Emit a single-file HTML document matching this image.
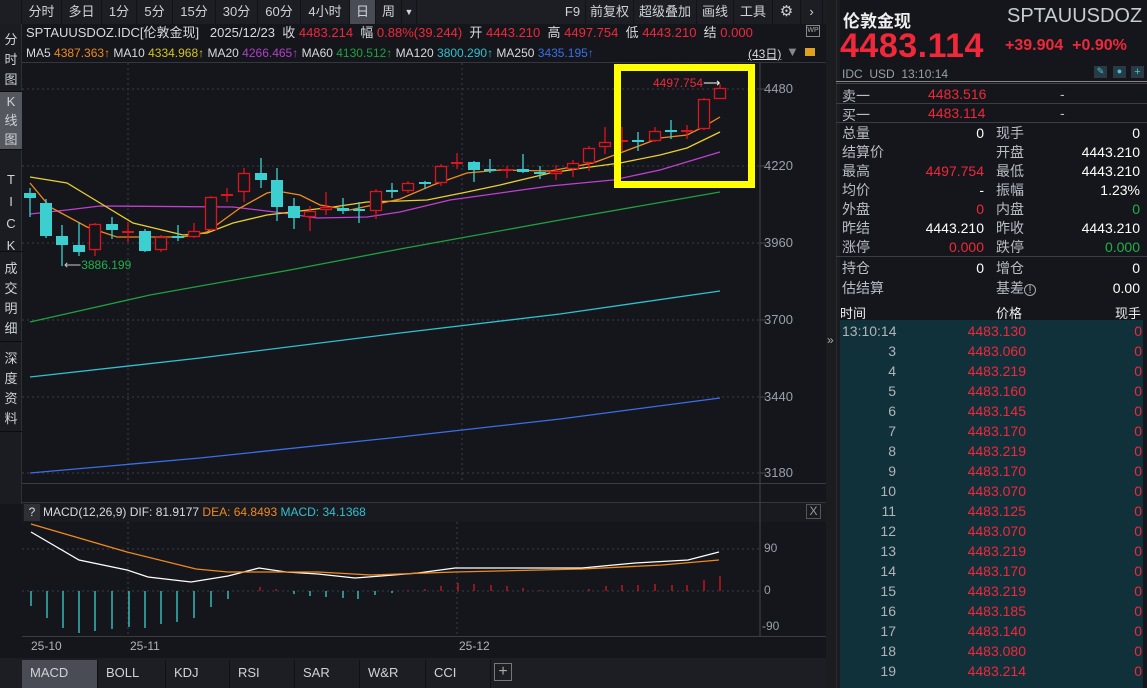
<!DOCTYPE html>
<html><head><meta charset="utf-8">
<style>
*{margin:0;padding:0;box-sizing:border-box}
body{width:1147px;height:688px;overflow:hidden;background:#14161b;font-family:"Liberation Sans","Noto Sans CJK SC",sans-serif;color:#d8dadf;position:relative}
.a{position:absolute;white-space:nowrap}
.tb{position:absolute;top:0;height:24px;font-size:13px;line-height:24px;text-align:center;color:#cfd2d8;border-right:1px solid #111317}
.side{position:absolute;left:0;width:22px;font-size:13px;line-height:20px;text-align:center;color:#cfd2d8;border-bottom:1px solid #0c0d10}
.r{color:#f0283a}.g{color:#1fb14c}.w{color:#fff}.gr{color:#9aa0a8}
.tab{position:absolute;top:660px;height:28px;line-height:26px;font-size:13px;color:#cfd2d8;padding-left:8px;border-right:1px solid #0f1114}
.rp{font-size:14px;color:#b9bdc4}
</style></head><body>
<div class="a" style="left:0;top:0;width:826px;height:24px;background:#1c1e23"></div>
<div class="tb" style="left:0;width:22px"></div>
<div class="tb" style="left:22px;width:40px">分时</div>
<div class="tb" style="left:62px;width:40px">多日</div>
<div class="tb" style="left:102px;width:35px">1分</div>
<div class="tb" style="left:137px;width:36px">5分</div>
<div class="tb" style="left:173px;width:43px">15分</div>
<div class="tb" style="left:216px;width:42px">30分</div>
<div class="tb" style="left:258px;width:43px">60分</div>
<div class="tb" style="left:301px;width:49px">4小时</div>
<div class="tb" style="left:350px;width:26px;background:#4a4c55">日</div>
<div class="tb" style="left:376px;width:26px">周</div>
<div class="tb" style="left:402px;width:15px;font-size:9px">▼</div>
<div class="tb" style="left:560px;width:26px">F9</div>
<div class="tb" style="left:586px;width:48px">前复权</div>
<div class="tb" style="left:634px;width:63px">超级叠加</div>
<div class="tb" style="left:697px;width:37px">画线</div>
<div class="tb" style="left:734px;width:39px">工具</div>
<div class="tb" style="left:773px;width:28px;font-size:15px">⚙</div>
<div class="tb" style="left:801px;width:22px">›</div>
<div class="a" style="left:0;top:24px;width:22px;height:480px;background:#1a1c21;border-right:1px solid #2d3036"></div>
<div class="side" style="top:30px;height:62px">分<br>时<br>图</div>
<div class="side" style="top:92px;height:58px;background:#55575f;padding-top:0px;line-height:19px">K<br>线<br>图</div>
<div class="side" style="top:150px;height:102px;padding-top:19px;line-height:22px">T<br>I<br>C<br>K</div>
<div class="side" style="top:252px;height:90px;padding-top:7px">成<br>交<br>明<br>细</div>
<div class="side" style="top:342px;height:90px;padding-top:7px">深<br>度<br>资<br>料</div>
<div class="a" style="left:26px;top:25px;font-size:13px;line-height:16px">SPTAUUSDOZ.IDC[伦敦金现]&nbsp;&nbsp;&nbsp;2025/12/23&nbsp;&nbsp;收 <span class="r">4483.214</span>&nbsp;&nbsp;幅 <span class="r">0.88%(39.244)</span>&nbsp;&nbsp;开 <span class="r">4443.210</span>&nbsp;&nbsp;高 <span class="r">4497.754</span>&nbsp;&nbsp;低 <span class="r">4443.210</span>&nbsp;&nbsp;结 <span class="r">0.000</span></div>
<div class="a" style="left:26px;top:45px;font-size:12px;line-height:16px">MA5 <span style="color:#f08a1e">4387.363↑</span> MA10 <span style="color:#d6c21e">4334.968↑</span> MA20 <span style="color:#b040c8">4266.465↑</span> MA60 <span style="color:#20a040">4130.512↑</span> MA120 <span style="color:#30c0d0">3800.290↑</span> MA250 <span style="color:#3a6ee8">3435.195↑</span></div>
<div class="a" style="left:748px;top:45px;font-size:12px;text-decoration:underline">(43日)</div>
<div class="a" style="left:786px;top:44px;font-size:13px;color:#888">▼</div>
<div class="a" style="left:805px;top:48px;width:10px;height:8px;background:#e0a020"></div>
<div class="a" style="left:806px;top:25px;width:14px;height:12px;border:1px solid #888;font-size:7px;color:#aaa;line-height:10px;text-align:center">WP</div>
<div class="a" style="left:22px;top:62px;width:804px;height:1px;background:#33363c"></div>
<div class="a gr" style="left:764px;top:81px;font-size:13px">4480</div>
<div class="a gr" style="left:764px;top:158px;font-size:13px">4220</div>
<div class="a gr" style="left:764px;top:235px;font-size:13px">3960</div>
<div class="a gr" style="left:764px;top:312px;font-size:13px">3700</div>
<div class="a gr" style="left:764px;top:389px;font-size:13px">3440</div>
<div class="a gr" style="left:764px;top:465px;font-size:13px">3180</div>
<div class="a r" style="left:653px;top:76px;font-size:12px">4497.754<span class="w">⟶</span></div>
<div class="a g" style="left:64px;top:258px;font-size:12px"><span style="color:#ccc">⟵</span>3886.199</div>
<div class="a" style="left:22px;top:502px;width:804px;height:20px;background:#181a1f;border-top:1px solid #33363c"></div>
<div class="a" style="left:24px;top:504px;width:16px;height:17px;background:#2e3036;font-size:12px;text-align:center;line-height:17px">?</div>
<div class="a" style="left:43px;top:505px;font-size:12px">MACD(12,26,9) DIF: 81.9177 <span style="color:#f08a1e">DEA: 64.8493</span> <span style="color:#30c0d0">MACD: 34.1368</span></div>
<div class="a" style="left:806px;top:504px;width:15px;height:15px;border:1px solid #555;color:#999;font-size:12px;line-height:13px;text-align:center">X</div>
<div class="a gr" style="left:764px;top:541px;font-size:12px">90</div>
<div class="a gr" style="left:764px;top:583px;font-size:12px">0</div>
<div class="a gr" style="left:762px;top:619px;font-size:12px">-90</div>
<div class="a gr" style="left:31px;top:639px;font-size:12px;color:#b0b4ba">25-10</div>
<div class="a gr" style="left:130px;top:639px;font-size:12px;color:#b0b4ba">25-11</div>
<div class="a gr" style="left:459px;top:639px;font-size:12px;color:#b0b4ba">25-12</div>
<div class="a" style="left:0;top:658px;width:826px;height:30px;background:#1c1e23"></div>
<div class="tab" style="left:22px;width:76px;background:#4a4c55">MACD</div>
<div class="tab" style="left:98px;width:68px">BOLL</div>
<div class="tab" style="left:166px;width:64px">KDJ</div>
<div class="tab" style="left:230px;width:65px">RSI</div>
<div class="tab" style="left:295px;width:65px">SAR</div>
<div class="tab" style="left:360px;width:66px">W&amp;R</div>
<div class="tab" style="left:426px;width:65px">CCI</div>
<div class="a" style="left:494px;top:663px;width:18px;height:18px;border:1px solid #777;color:#aaa;text-align:center;line-height:15px;font-size:16px">+</div>
<svg class="a" style="left:0;top:0" width="830" height="688">
<g stroke="#3a3d44" stroke-dasharray="2,3" stroke-width="1">
<line x1="22" y1="89" x2="760" y2="89"/><line x1="22" y1="166" x2="760" y2="166"/><line x1="22" y1="243" x2="760" y2="243"/><line x1="22" y1="320" x2="760" y2="320"/><line x1="22" y1="397" x2="760" y2="397"/><line x1="22" y1="473" x2="760" y2="473"/>
<line x1="128" y1="63" x2="128" y2="483"/><line x1="462" y1="63" x2="462" y2="483"/>
<line x1="22" y1="549" x2="760" y2="549"/><line x1="22" y1="591" x2="760" y2="591"/><line x1="128" y1="522" x2="128" y2="636"/><line x1="457" y1="522" x2="457" y2="636"/>
</g>
<line x1="760" y1="63" x2="760" y2="636" stroke="#44474e"/>
<line x1="22" y1="483.5" x2="826" y2="483.5" stroke="#3a3d44"/>
<line x1="22" y1="636.5" x2="826" y2="636.5" stroke="#3a3d44"/>
<g stroke="#44474e"><line x1="760" y1="89" x2="766" y2="89"/><line x1="760" y1="166" x2="766" y2="166"/><line x1="760" y1="243" x2="766" y2="243"/><line x1="760" y1="320" x2="766" y2="320"/><line x1="760" y1="397" x2="766" y2="397"/><line x1="760" y1="473" x2="766" y2="473"/></g>
<g fill="none" stroke-width="1.3">
<polyline stroke="#3a6ee8" points="30,473 200,458 400,437 560,419 720,398"/>
<polyline stroke="#30c0d0" points="30,377 200,358 400,333 560,314 720,291"/>
<polyline stroke="#20a040" points="30,322 150,295 290,270 400,249 560,220 720,192"/>
<polyline stroke="#c040d0" points="30,214 67,210 100,206 233,207 283,213 317,218 367,217 400,212 450,200 550,186 613,180 660,170 720,152"/>
<polyline stroke="#e8d030" points="30,177 67,183 100,203 133,223 183,235 207,233 233,223 267,215 300,211 333,207 367,202 400,201 427,200 467,192 500,185 550,173 583,168 620,163 660,155 687,148 720,132"/>
<polyline stroke="#f08a1e" points="30,183 50,207 87,227 117,237 183,237 207,232 240,208 267,193 277,191 300,195 320,205 350,210 400,199 433,185 467,173 500,170 550,171 593,163 620,153 660,138 687,135 703,127 720,117"/>
<polyline stroke="#ffffff" points="31,532 79,560 127,570 148,577 191,582 228,576 259,568 286,572 318,574 355,578 381,576 418,573 455,568 529,568 582,568 635,563 688,560 719,552"/>
<polyline stroke="#f08a1e" points="31,524 127,552 196,569 228,572 318,572 371,575 455,572 582,569 662,565 719,560"/>
</g>
<g id="cd"></g>
<rect x="617.5" y="67.5" width="134" height="117" fill="none" stroke="#ffff00" stroke-width="7"/>
</svg>
<div class="a" style="left:826px;top:0;width:14px;height:688px;background:#1a1c20"></div>
<div class="a" style="left:836px;top:0;width:1px;height:688px;background:#2a2c31"></div>
<div class="a" style="left:827px;top:333px;font-size:12px;color:#aaa">»</div>
<div class="a" style="left:840px;top:0;width:307px;height:688px;background:#14161b"></div>
<div class="a" style="left:843px;top:7px;font-size:17px;font-weight:bold;color:#eee">伦敦金现</div>
<div class="a" style="left:1007px;top:5px;font-size:20px;color:#c8ccd2">SPTAUUSDOZ</div>
<div class="a r" style="left:840px;top:27px;font-size:34px;font-weight:bold;letter-spacing:0.5px">4483.114</div>
<div class="a r" style="left:1005px;top:37px;font-size:16px;font-weight:bold">+39.904&nbsp;&nbsp;+0.90%</div>
<div class="a gr" style="left:842px;top:67px;font-size:12px">IDC&nbsp;&nbsp;USD&nbsp;&nbsp;13:10:14</div>
<div class="a" style="left:1094px;top:66px;width:13px;height:12px;background:#2a3a44;color:#3cc8d8;font-size:9px;text-align:center">✎</div>
<div class="a" style="left:1113px;top:66px;width:13px;height:12px;background:#2a3a44;color:#3cc8d8;font-size:9px;text-align:center">●</div>
<div class="a" style="left:1131px;top:66px;width:13px;height:12px;background:#2a3a44;color:#3cc8d8;font-size:11px;line-height:12px;text-align:center">+</div>
<div class="a" style="left:836px;top:81px;width:311px;height:3px;border-top:1px solid #888;border-bottom:1px solid #444"></div>
<div class="a" style="left:836px;top:103px;width:311px;height:1px;background:#3a3d44"></div>
<div class="a" style="left:836px;top:122px;width:311px;height:1px;background:#3a3d44"></div>
<div class="a" style="left:836px;top:256px;width:311px;height:1px;background:#3a3d44"></div>
<div class="a rp" style="left:842px;top:86px">卖一</div><div class="a r" style="left:928px;top:86px;font-size:14px">4483.516</div><div class="a rp" style="left:1060px;top:86px">-</div>
<div class="a rp" style="left:842px;top:105px">买一</div><div class="a r" style="left:928px;top:105px;font-size:14px">4483.114</div><div class="a rp" style="left:1060px;top:105px">-</div>
<div class="a rp" style="left:842px;top:124px;line-height:19px">总量<br>结算价<br>最高<br>均价<br>外盘<br>昨结<br>涨停</div>
<div class="a rp" style="left:996px;top:124px;line-height:19px">现手<br>开盘<br>最低<br>振幅<br>内盘<br>昨收<br>跌停</div>
<div class="a rp" style="left:880px;top:124px;width:104px;text-align:right;line-height:19px;color:#fff">0<br>&nbsp;<br><span class="r">4497.754</span><br>-<br><span class="r">0</span><br>4443.210<br><span class="r">0.000</span></div>
<div class="a rp" style="left:1040px;top:124px;width:100px;text-align:right;line-height:19px;color:#fff">0<br>4443.210<br>4443.210<br>1.23%<br><span class="g">0</span><br>4443.210<br><span class="g">0.000</span></div>
<div class="a rp" style="left:842px;top:258px;line-height:20px">持仓<br>估结算</div>
<div class="a rp" style="left:996px;top:258px;line-height:20px">增仓<br>基差<span style="font-size:11px;border:1px solid #aaa;border-radius:50%;display:inline-block;width:12px;height:12px;line-height:11px;text-align:center">!</span></div>
<div class="a rp" style="left:880px;top:258px;width:104px;text-align:right;line-height:20px;color:#fff">0</div>
<div class="a rp" style="left:1040px;top:258px;width:100px;text-align:right;line-height:20px;color:#fff">0<br>0.00</div>
<div class="a" style="left:840px;top:303px;font-size:13px;color:#eee">时间</div>
<div class="a" style="left:996px;top:303px;font-size:13px;color:#eee">价格</div>
<div class="a" style="left:1115px;top:303px;font-size:13px;color:#eee">现手</div>
<div class="a" style="left:840px;top:320px;width:303px;height:368px;background:#10303a"></div>
<div class="a" style="left:842px;top:321px;width:54px;font-size:14px;line-height:20px;text-align:right;color:#b0b4ba">13:10:14<br>3<br>4<br>5<br>6<br>7<br>8<br>9<br>10<br>11<br>12<br>13<br>14<br>15<br>16<br>17<br>18<br>19</div>
<div class="a r" style="left:960px;top:321px;width:66px;font-size:14px;line-height:20px;text-align:right">4483.130<br>4483.060<br>4483.219<br>4483.160<br>4483.145<br>4483.170<br>4483.219<br>4483.170<br>4483.070<br>4483.125<br>4483.070<br>4483.219<br>4483.170<br>4483.219<br>4483.185<br>4483.140<br>4483.080<br>4483.214</div>
<div class="a r" style="left:1100px;top:321px;width:42px;font-size:14px;line-height:20px;text-align:right">0<br>0<br>0<br>0<br>0<br>0<br>0<br>0<br>0<br>0<br>0<br>0<br>0<br>0<br>0<br>0<br>0<br>0</div>
<script>
var C=[[30,193,198,188,217,'c'],[46,203,236,199,238,'c'],[62,236,245,225,266,'c'],[79,245,252,222,256,'c'],[95,224,250,223,256,'r'],[112,224,230,217,239,'c'],[128,231,233,222,242,'r'],[145,231,251,229,252,'c'],[161,237,250,235,252,'r'],[178,236,238,225,241,'c'],[194,231,237,223,238,'r'],[211,197,230,196,231,'r'],[227,194,196,188,202,'r'],[244,173,192,168,202,'r'],[261,173,180,158,188,'c'],[277,180,207,168,221,'c'],[294,206,218,198,229,'c'],[310,211,217,206,231,'r'],[326,207,210,192,215,'r'],[343,208,211,198,214,'c'],[359,209,211,202,223,'c'],[376,191,211,189,219,'r'],[392,190,192,183,198,'c'],[408,183,191,181,193,'r'],[425,182,184,181,189,'c'],[441,166,183,164,186,'r'],[457,162,164,153,169,'r'],[474,162,170,161,182,'c'],[490,169,171,159,173,'c'],[507,169,171,166,178,'r'],[523,169,172,154,173,'c'],[540,172,174,166,179,'c'],[556,171,174,165,180,'r'],[573,163,169,160,177,'r'],[589,148,163,146,171,'r'],[605,142,147,127,154,'r'],[622,140,142,127,151,'r'],[638,140,142,132,151,'c'],[655,131,141,127,142,'r'],[671,130,132,120,139,'c'],[687,130,132,125,139,'r'],[704,99,129,98,130,'r'],[720,88,99,84,99,'r']];
var H=[[31,606],[47,618],[63,628],[79,633],[95,631],[112,629],[129,627],[145,628],[161,624],[177,622],[194,618],[211,607],[228,599],[260,587],[276,589],[294,594],[310,596],[326,597],[343,598],[358,599],[375,595],[392,593],[408,590],[425,589],[441,586],[458,583],[474,584],[491,585],[507,586],[523,588],[540,590],[589,589],[606,586],[622,585],[638,585],[655,584],[672,585],[687,585],[704,580],[720,576]];
var s='';
C.forEach(function(d){var x=d[0],col=d[5]=='r'?'#e0141e':'#3ccfcf';
s+='<line x1="'+x+'" y1="'+d[3]+'" x2="'+x+'" y2="'+d[4]+'" stroke="'+col+'" stroke-width="1.3"/>';
var h=d[2]-d[1];
if(h<3){s+='<rect x="'+(x-6)+'" y="'+d[1]+'" width="12" height="2" fill="'+col+'"/>';}
else if(d[5]=='r'){s+='<rect x="'+(x-5.5)+'" y="'+(d[1]+.5)+'" width="11" height="'+(h-1)+'" fill="#14161b" stroke="'+col+'" stroke-width="1.3"/>';}
else{s+='<rect x="'+(x-6)+'" y="'+d[1]+'" width="12" height="'+h+'" fill="'+col+'"/>';}
});
H.forEach(function(d){var x=d[0],y=d[1];var col=y>591?'#3ccfcf':'#e0141e';s+='<line x1="'+x+'" y1="591" x2="'+x+'" y2="'+y+'" stroke="'+col+'" stroke-width="1.3"/>';});
document.getElementById('cd').innerHTML=s;
</script>
</body></html>
